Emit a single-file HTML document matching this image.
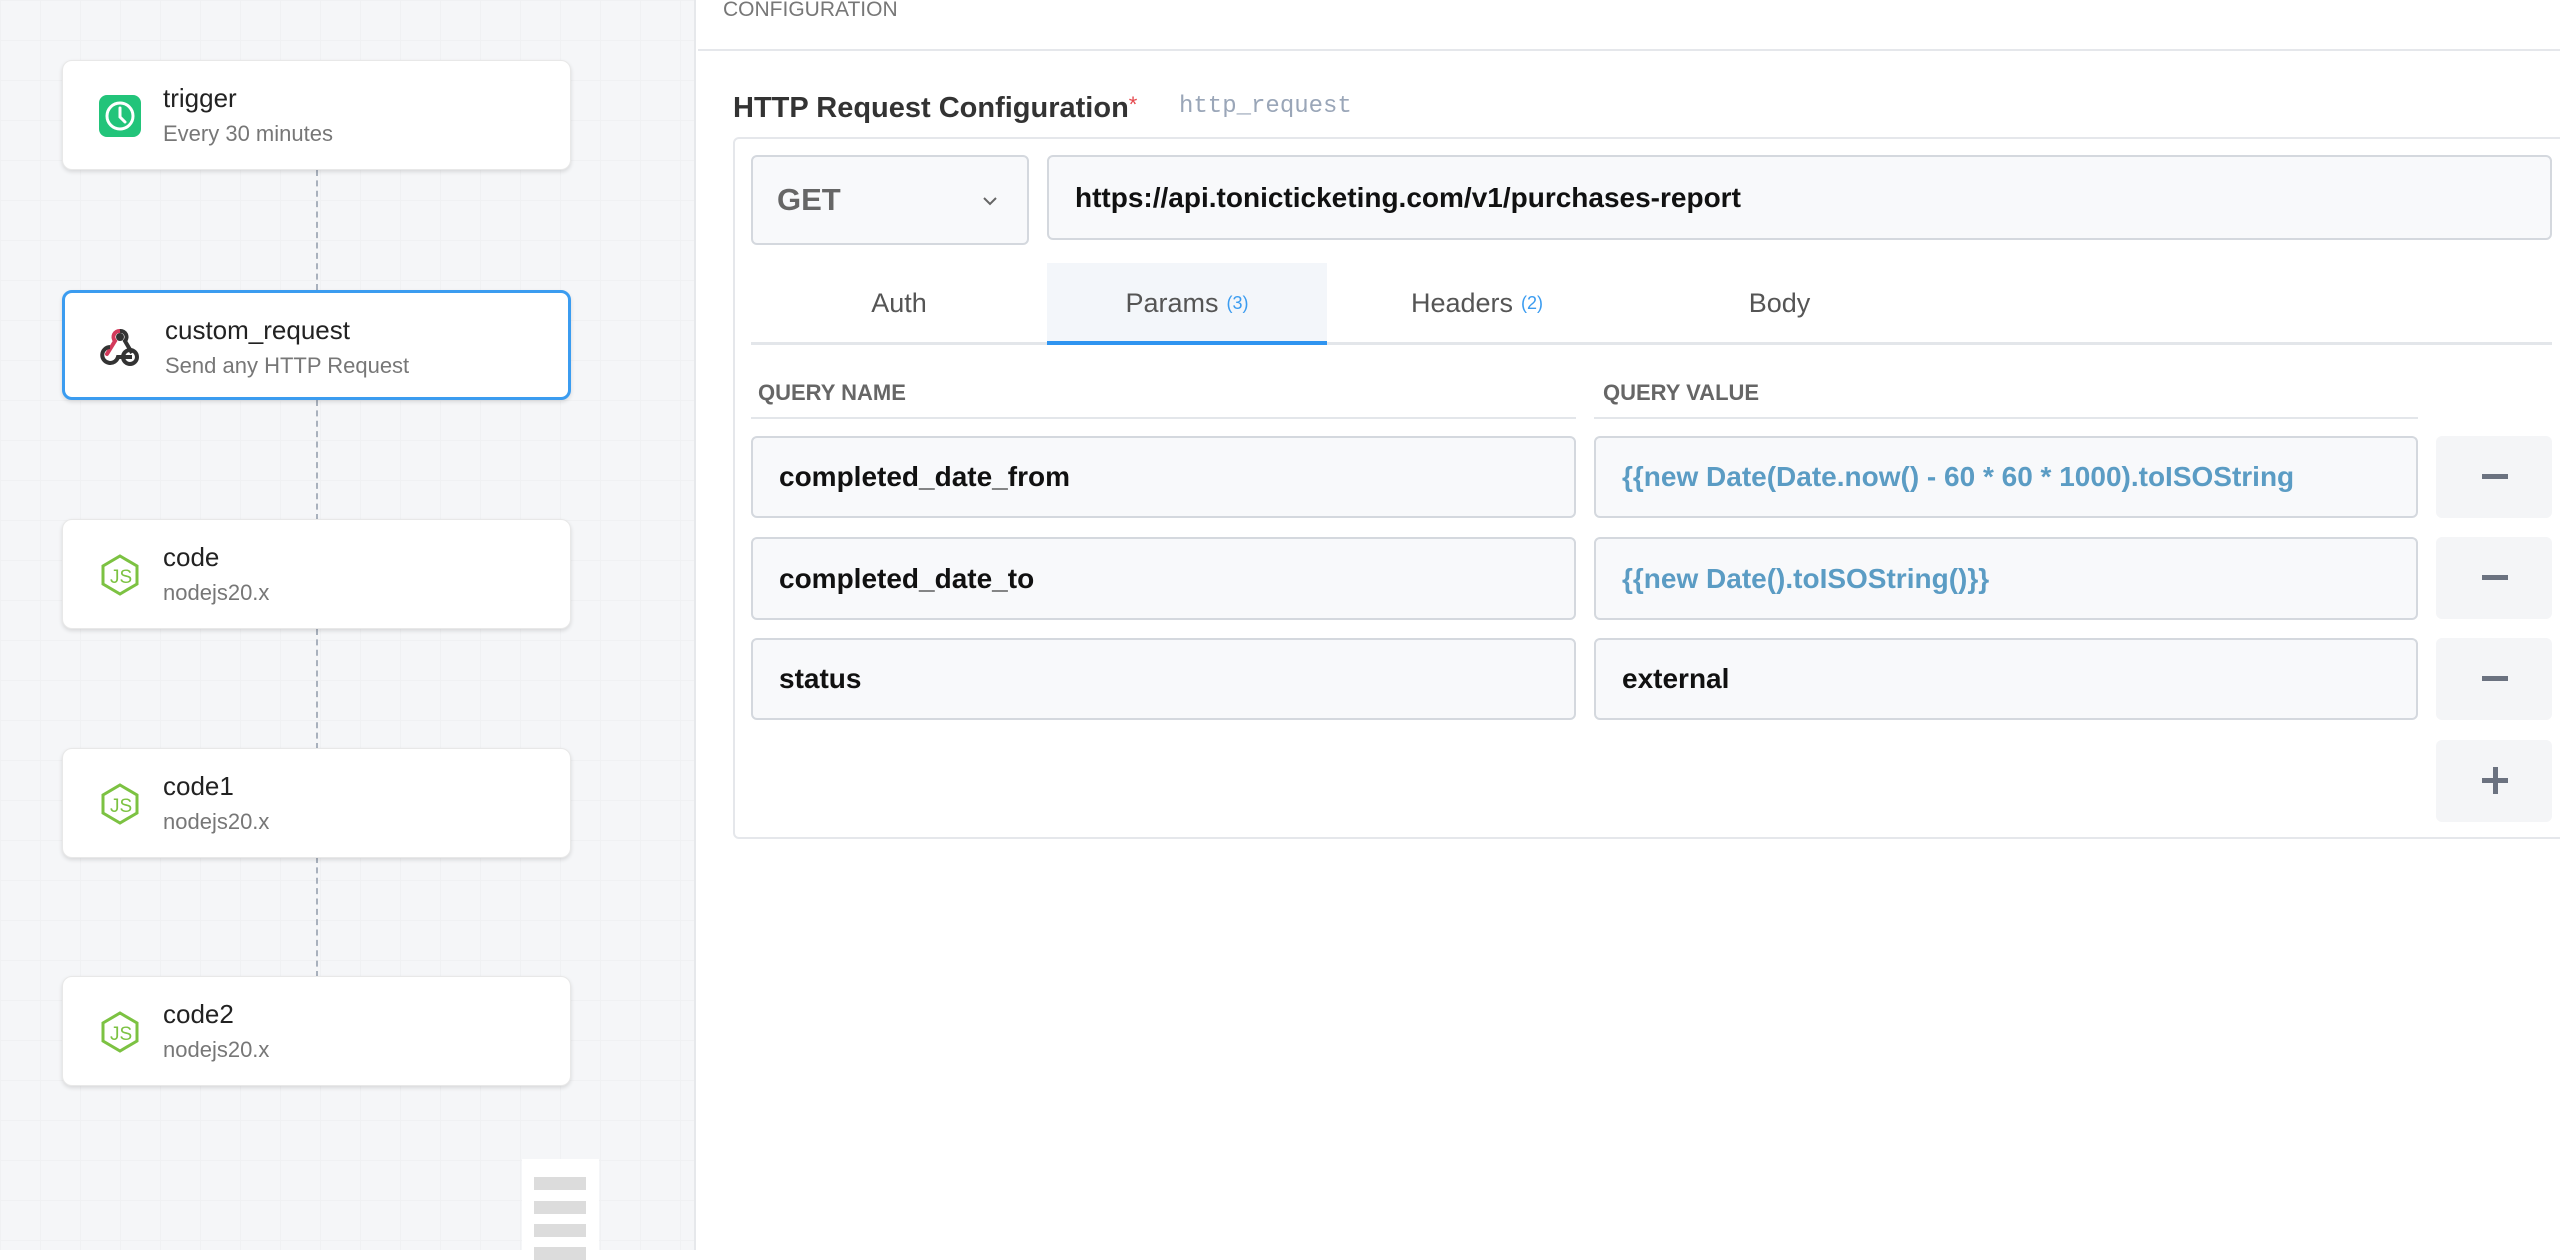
<!DOCTYPE html>
<html><head><meta charset="utf-8"><style>
*{box-sizing:border-box;margin:0;padding:0}
body{width:2560px;height:1250px;overflow:hidden;background:#fff;font-family:"Liberation Sans",sans-serif;position:relative}
.left{position:absolute;left:0;top:0;width:696px;height:1250px;background-color:#f5f6f8;
background-image:linear-gradient(#f0f1f3 1px,transparent 1px),linear-gradient(90deg,#f0f1f3 1px,transparent 1px);background-size:40px 40px;border-right:2px solid #e6e8eb}
.card{position:absolute;left:62px;width:509px;height:110px;background:#fff;border-radius:10px;box-shadow:0 2px 4px rgba(0,0,0,.12);border:1px solid #e8e8e8}
.card.sel{border:3px solid #3b9cf0}
.card .ic{position:absolute;left:36px;top:34px;width:42px;height:42px}
.card .t{position:absolute;left:100px;top:22px;font-size:26px;color:#222}
.card .s{position:absolute;left:100px;top:60px;font-size:22px;color:#777}
.dash{position:absolute;left:316px;width:0;border-left:2px dashed #a9b1bd}
.mini{position:absolute;left:522px;top:1159px;width:77px;height:91px;background:#fff}
.mini i{position:absolute;left:12px;width:52px;height:13px;background:#dcdcdc}
.abs{position:absolute}
.inp{position:absolute;background:#f8f9fb;border:2px solid #d4d8de;border-radius:6px;font-weight:bold;font-size:28px;color:#111;padding-left:26px;display:flex;align-items:center}
.btn{position:absolute;left:2436px;width:116px;height:82px;background:#f4f5f7;border-radius:6px}
.minus{position:absolute;left:46px;top:38px;width:26px;height:5px;background:#6b7280}
.hdr{position:absolute;font-size:22px;font-weight:bold;color:#666;top:380px}
.tab{position:absolute;top:263px;height:81px;font-size:27px;color:#555;display:flex;align-items:center;justify-content:center}
.tab sup{font-size:18px;color:#3b9cf0;vertical-align:baseline;margin-left:8px}
</style></head><body>
<div class="left">
 <div class="dash" style="top:170px;height:120px"></div>
 <div class="dash" style="top:400px;height:120px"></div>
 <div class="dash" style="top:629px;height:120px"></div>
 <div class="dash" style="top:857px;height:120px"></div>
 <div class="card" style="top:60px"><svg class="ic" viewBox="0 0 42 42"><rect x="0" y="0" width="42" height="42" rx="8" fill="#22c47a"/><circle cx="21" cy="21" r="13" fill="none" stroke="#fff" stroke-width="3"/><path d="M21 13v9l5 5" fill="none" stroke="#fff" stroke-width="3" stroke-linecap="round"/></svg><div class="t">trigger</div><div class="s">Every 30 minutes</div></div>
 <div class="card sel" style="top:290px"><svg class="ic" viewBox="0 0 42 42" style="left:34px;top:32px"><path d="M21 6a6 6 0 0 0-5 10l-8 13" fill="none" stroke="#d33a5b" stroke-width="4" stroke-linecap="round"/><path d="M21 6a6 6 0 0 1 5 10l7 12" fill="none" stroke="#333" stroke-width="4"/><circle cx="21" cy="12" r="4" fill="#333"/><path d="M11 22a8 8 0 1 0 8 10h14" fill="none" stroke="#333" stroke-width="4"/><circle cx="31" cy="32" r="7" fill="none" stroke="#333" stroke-width="4"/></svg><div class="t">custom_request</div><div class="s">Send any HTTP Request</div></div>
 <div class="card" style="top:519px"><svg class="ic" viewBox="0 0 42 42"><path d="M21 2l17 10v18L21 40 4 30V12z" fill="none" stroke="#7cc242" stroke-width="3"/><text x="11" y="29" font-size="19" fill="#7cc242" font-family="Liberation Sans">JS</text></svg><div class="t">code</div><div class="s">nodejs20.x</div></div>
 <div class="card" style="top:748px"><svg class="ic" viewBox="0 0 42 42"><path d="M21 2l17 10v18L21 40 4 30V12z" fill="none" stroke="#7cc242" stroke-width="3"/><text x="11" y="29" font-size="19" fill="#7cc242" font-family="Liberation Sans">JS</text></svg><div class="t">code1</div><div class="s">nodejs20.x</div></div>
 <div class="card" style="top:976px"><svg class="ic" viewBox="0 0 42 42"><path d="M21 2l17 10v18L21 40 4 30V12z" fill="none" stroke="#7cc242" stroke-width="3"/><text x="11" y="29" font-size="19" fill="#7cc242" font-family="Liberation Sans">JS</text></svg><div class="t">code2</div><div class="s">nodejs20.x</div></div>
 <div class="mini"><i style="top:18px"></i><i style="top:42px"></i><i style="top:65px"></i><i style="top:88px"></i></div>
</div>

<div class="abs" style="left:723px;top:-2px;font-size:21px;color:#777">CONFIGURATION</div>
<div class="abs" style="left:698px;top:49px;width:1862px;height:2px;background:#e5e7eb"></div>
<div class="abs" style="left:733px;top:92px;font-size:29px;font-weight:bold;color:#333">HTTP Request Configuration<span style="color:#e5484d;font-weight:normal;font-size:22px;vertical-align:top">*</span></div>
<div class="abs" style="left:1179px;top:93px;font-size:24px;color:#9aa6b8;font-family:'Liberation Mono',monospace">http_request</div>
<div class="abs" style="left:733px;top:137px;width:1840px;height:702px;border:2px solid #e5e7eb;border-radius:6px"></div>

<div class="inp" style="left:751px;top:155px;width:278px;height:90px;color:#666;font-size:31px;padding-left:24px">GET<svg style="position:absolute;right:28px;top:38px" width="18" height="12" viewBox="0 0 18 12"><path d="M3 3l6 6 6-6" fill="none" stroke="#666" stroke-width="2"/></svg></div>
<div class="inp" style="left:1047px;top:155px;width:1505px;height:85px">https://api.tonicticketing.com/v1/purchases-report</div>

<div class="abs" style="left:1047px;top:263px;width:280px;height:81px;background:#f3f6fa"></div>
<div class="abs" style="left:751px;top:342px;width:1801px;height:3px;background:#e3e6ea"></div>
<div class="abs" style="left:1047px;top:341px;width:280px;height:4px;background:#2f94f0"></div>
<div class="tab" style="left:751px;width:296px">Auth</div>
<div class="tab" style="left:1047px;width:280px">Params<sup>(3)</sup></div>
<div class="tab" style="left:1327px;width:300px">Headers<sup>(2)</sup></div>
<div class="tab" style="left:1627px;width:305px">Body</div>

<div class="hdr" style="left:758px">QUERY NAME</div>
<div class="hdr" style="left:1603px">QUERY VALUE</div>
<div class="abs" style="left:751px;top:417px;width:825px;height:2px;background:#e3e6ea"></div>
<div class="abs" style="left:1594px;top:417px;width:824px;height:2px;background:#e3e6ea"></div>

<div class="inp" style="left:751px;top:436px;width:825px;height:82px">completed_date_from</div>
<div class="inp" style="left:1594px;top:436px;width:824px;height:82px;color:#5b9cc4">{{new Date(Date.now() - 60 * 60 * 1000).toISOString</div>
<div class="btn" style="top:436px"><div class="minus"></div></div>
<div class="inp" style="left:751px;top:537px;width:825px;height:83px">completed_date_to</div>
<div class="inp" style="left:1594px;top:537px;width:824px;height:83px;color:#5b9cc4">{{new Date().toISOString()}}</div>
<div class="btn" style="top:537px"><div class="minus"></div></div>
<div class="inp" style="left:751px;top:638px;width:825px;height:82px">status</div>
<div class="inp" style="left:1594px;top:638px;width:824px;height:82px">external</div>
<div class="btn" style="top:638px"><div class="minus"></div></div>
<div class="btn" style="top:740px"><div class="minus"></div><div class="minus" style="left:57px;top:27px;width:5px;height:27px"></div></div>
</body></html>
